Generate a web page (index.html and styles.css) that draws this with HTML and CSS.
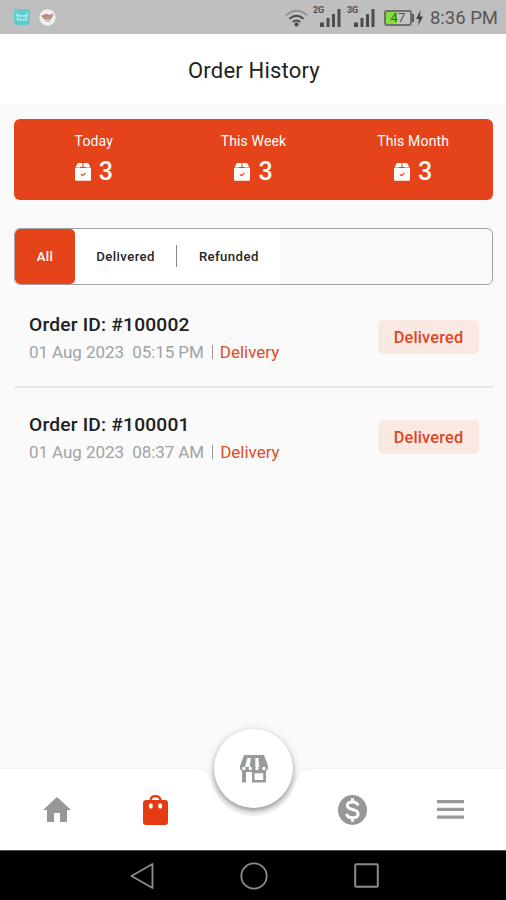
FILE: index.html
```html
<!DOCTYPE html>
<html lang="en">
<head>
<meta charset="utf-8">
<title>Order History</title>
<link rel="stylesheet" href="styles.css">
</head>
<body>
<svg class="defs" width="0" height="0" aria-hidden="true">
  <symbol id="package" viewBox="0 0 16 18">
    <path fill="#fff" d="M3.600 0h3.800v3.600l-.9.6-.7-.6-1 .8H.6L2.300.8Q2.600 0 3.600 0zM8.400 0h4q1 0 1.300.8l1.700 3.600H11l-.9-.8-.7.6-1-.6zM0 5.100h16v11.400q0 1.200-1.200 1.200H1.200Q0 17.700 0 16.500z"/>
    <path fill="none" stroke="#e54319" stroke-width="1.100" d="M5.800 11.200l1.700 1.500 3-2.900"/>
  </symbol>
  <symbol id="signal" viewBox="0 0 22 18">
    <path fill="#4c4c4c" d="M0 13.500h4V18H0zM6.500 9h3v9h-3zM12 5h3v13h-3zM17.500 0h3v18h-3z"/>
  </symbol>
</svg>
<div class="screen">
  <div class="status">
    <div class="notices">
      <svg width="16" height="16" viewBox="0 0 16 16"><rect width="16" height="16" rx="2.500" fill="#62cbd0"/><path d="M3.500 10.800V7.500l-.8-2.200 2.500 1.500h5.600l2.500-1.500-.8 2.200v3.300z" fill="none" stroke="#b5f0ef" stroke-width="1.200"/><path d="M5.500 9h1M9.500 9h1" stroke="#c9f5f3"/></svg>
      <svg width="17" height="17" viewBox="0 0 17 17"><circle cx="8.500" cy="8.500" r="8.200" fill="#f0efef"/><path d="M3 6.500l2.500 3h6l2.500-4.500" fill="none" stroke="#8d7d79" stroke-width="1.300"/><path d="M4 6q4-2 6 0l3-1.500-2 4H5.500z" fill="#c98074"/><path d="M6 11.800h5" stroke="#a29a96"/></svg>
    </div>
    <div class="indicators">
      <svg class="wifi" width="23" height="18" viewBox="0 0 23 18"><g fill="none" stroke-width="2"><path stroke="#929292" d="M1 6.300q10.500-9 21 0"/><path stroke="#4b4b4b" d="M4.500 9.700q7-6 14 0M7.800 13q3.700-3 7.400 0"/></g><circle cx="11.500" cy="15.500" r="2" fill="#444"/></svg>
      <div class="cell"><span>2G</span><svg width="22" height="18"><use href="#signal"/></svg></div>
      <div class="cell second"><span>3G</span><svg width="22" height="18"><use href="#signal"/></svg></div>
      <div class="battery"><span>47</span></div>
      <svg class="bolt" width="7" height="16" viewBox="0 0 7 16"><path fill="#444" d="M4.500 0L0 9h3L2 16l5-9.500H4z"/></svg>
      <time>8:36 PM</time>
    </div>
  </div>
  <header><h1>Order History</h1></header>
  <main>
    <section class="summary">
      <div class="stat"><span class="label">Today</span><div class="count"><svg width="16" height="18"><use href="#package"/></svg><b>3</b></div></div>
      <div class="stat"><span class="label">This Week</span><div class="count"><svg width="16" height="18"><use href="#package"/></svg><b>3</b></div></div>
      <div class="stat"><span class="label">This Month</span><div class="count"><svg width="16" height="18"><use href="#package"/></svg><b>3</b></div></div>
    </section>
    <nav class="filters">
      <span class="filter active">All</span>
      <span class="filter">Delivered</span>
      <i></i>
      <span class="filter">Refunded</span>
    </nav>
    <section class="orders">
      <article class="order">
        <div><h2>Order ID: #100002</h2><p><span class="date">01 Aug 2023&nbsp; 05:15 PM</span><i></i><span class="type">Delivery</span></p></div>
        <span class="badge">Delivered</span>
      </article>
      <article class="order">
        <div><h2>Order ID: #100001</h2><p><span class="date">01 Aug 2023&nbsp; 08:37 AM</span><i></i><span class="type">Delivery</span></p></div>
        <span class="badge">Delivered</span>
      </article>
    </section>
  </main>
  <nav class="tabs">
    <svg class="bar" width="506" height="90" viewBox="0 0 506 90"><path fill="#fff" d="M0 9h195Q207 9 211 20C217 42 233 56 253.500 56S290 42 296 20Q300 9 312 9H506V90H0z"/></svg>
    <div class="tab"><svg width="28" height="25" viewBox="0 0 28 25"><path fill="#979797" d="M14 0l14 13h-4v12h-7v-9h-6v9H4V13H0z"/></svg></div>
    <div class="tab"><svg width="25" height="30" viewBox="0 0 25 30"><rect y="5" width="25" height="25" rx="3" fill="#e43b13"/><path d="M7.500 8V6q0-4.800 5-4.800t5 4.800v2" fill="none" stroke="#e43b13" stroke-width="2.200"/><ellipse cx="7.800" cy="11" rx="2" ry="2.700" fill="#fff"/><ellipse cx="17.200" cy="11" rx="2" ry="2.700" fill="#fff"/></svg></div>
    <div class="tab"><div class="store"><svg width="28" height="28" viewBox="0 0 28 28"><path fill="#969b9e" d="M4 0h20l4 11v2q0 2-2 3v11.500H12V17H6v10.500H2V16q-2-1-2-3v-2z"/><g fill="#fff"><path d="M7.500 3h3.200L9.800 12H4.800zM15.300 3h3l1 9h-4zM14.500 18.200h8.700v6.800h-8.700z"/><circle cx="3.800" cy="13.500" r="1.700"/><circle cx="10.300" cy="13.500" r="1.700"/><circle cx="17" cy="13.500" r="1.700"/><circle cx="24" cy="13.500" r="1.700"/></g></svg></div></div>
    <div class="tab"><svg width="29" height="30" viewBox="0 0 29 30"><ellipse cx="14.500" cy="15" rx="14.500" ry="15" fill="#979797"/><path d="M20 10.500Q19 7 14.500 7 9.300 7 9.300 10.600c0 5.400 10.800 2.500 10.800 8.300q0 3.900-5.600 3.900-5.200 0-6-4M14.500 3.200V7M14.500 22.500v4.200" fill="none" stroke="#fff" stroke-width="3"/></svg></div>
    <div class="tab"><svg width="27" height="19" viewBox="0 0 27 19"><path fill="#999" d="M0 0h27v3.200H0zM0 7.700h27v3.200H0zM0 15.500h27v3.200H0z"/></svg></div>
  </nav>
  <footer>
    <svg width="24" height="28" viewBox="0 0 24 28"><path d="M22.500 2v24L1.500 14z" fill="none" stroke="#8b8b8b" stroke-width="1.900" stroke-linejoin="round"/></svg>
    <svg width="28" height="28" viewBox="0 0 28 28"><circle cx="14" cy="14" r="12.700" fill="none" stroke="#8b8b8b" stroke-width="1.800"/></svg>
    <svg width="25" height="25" viewBox="0 0 25 25"><rect x="1.200" y="1.200" width="22.600" height="22.600" rx="1" fill="none" stroke="#8b8b8b" stroke-width="2"/></svg>
  </footer>
</div>
</body>
</html>
```
FILE: styles.css
```css
* { box-sizing: border-box; }
body { margin: 0; font-family: Roboto, "Liberation Sans", sans-serif; background: #fafafa; }
svg { display: block; flex: none; }
.defs { position: absolute; }
.screen { width: 506px; height: 900px; display: flex; flex-direction: column; overflow: hidden; }

.status { height: 34px; flex: none; background: #bfbfbf; display: flex; justify-content: space-between; padding: 0 8px 0 14px; }
.notices { display: flex; align-items: center; gap: 9px; }
.indicators { display: flex; align-items: center; color: #505050; padding-top: 1px; }
.wifi { margin-right: 5px; }
.cell { display: flex; position: relative; padding-left: 7px; margin-right: 5px; }
.cell.second { margin-right: 8px; }
.cell span { position: absolute; left: 0; top: -3px; font-size: 9px; line-height: 9px; font-weight: 700; }
.battery { width: 28px; height: 16px; border: 2px solid #707070; border-radius: 3px; background: linear-gradient(90deg, #86df3e 11px, #c4c4c4 11px); display: flex; align-items: center; justify-content: center; position: relative; font-size: 13px; }
.battery::after { content: ""; position: absolute; left: 26px; top: 2px; width: 2px; height: 8px; background: #5b5b5b; }
.bolt { margin: 0 7px 0 4px; }
time { font-size: 18.500px; white-space: nowrap; color: #575757; }

header { height: 70px; flex: none; background: #fff; display: flex; align-items: center; justify-content: center; padding: 2px 0 0 2px; }
h1 { margin: 0; font-size: 22px; font-weight: 400; color: #222; letter-spacing: .2px; }
main { flex: 1; padding: 15px 13px 0 14px; min-height: 0; }
.summary { height: 81px; background: #e54319; border-radius: 6px; display: grid; grid-template-columns: repeat(3, 1fr); color: #fff; }
.stat { display: flex; flex-direction: column; align-items: center; padding: 12px 0 0; }
.label { font-size: 14px; line-height: 20px; letter-spacing: .15px; }
.count { display: flex; align-items: center; gap: 8px; height: 42px; }
.count b { font-size: 25px; font-weight: 500; line-height: 42px; }

.filters { margin-top: 28px; height: 57px; border: 1px solid #a3a3a3; border-radius: 6px; display: flex; align-items: center; overflow: hidden; }
.filter { height: 55px; display: flex; align-items: center; padding: 0 21.300px 1px 21.700px; background: #fff; font-size: 13.200px; font-weight: 500; color: #262626; letter-spacing: .4px; }
.filter.active { background: #e54319; color: #fff; border-radius: 5px; }
.filters i { width: 1px; height: 55px; background: linear-gradient(#fff 16px, #8a8a8a 16px 38px, #fff 38px); }

.orders { padding-top: 3px; }
.order { height: 100px; border-bottom: 2px solid #e7e7e7; padding: 1px 14px 0 15px; display: flex; align-items: center; justify-content: space-between; }
.order:last-child { border-color: transparent; }
h2 { margin: 0; font-size: 19.200px; line-height: 24px; font-weight: 500; color: #202020; letter-spacing: .2px; }
.order p { margin: 4px 0 0; font-size: 17px; line-height: 22px; display: flex; align-items: center; white-space: nowrap; }
.date { color: #a0a3a4; letter-spacing: -.07px; }
.order i { width: 1px; height: 14px; background: #999; margin: 0 7px 0 8px; }
.type { color: #e14b25; }
.badge { width: 101px; height: 34px; margin-bottom: 1px; background: #fae8e3; color: #dd4524; border-radius: 5px; display: flex; align-items: center; justify-content: center; font-size: 16.300px; font-weight: 500; letter-spacing: .2px; }

.tabs { height: 90px; flex: none; display: grid; grid-template-columns: repeat(5, 98.500px); justify-content: center; padding: 9px 0 0 1px; position: relative; }
.bar { position: absolute; inset: 0; filter: drop-shadow(0 0 2px #0001); }
.tab { display: flex; align-items: center; justify-content: center; position: relative; }
.store { width: 79px; height: 79px; border-radius: 50%; background: #fff; box-shadow: 0 3px 5px #0005, 0 1px 10px #0002; display: flex; align-items: center; justify-content: center; flex: none; position: relative; top: -41px; }
footer { height: 50px; flex: none; background: #000; border-top: 1px solid #555; display: flex; align-items: center; padding-left: 130px; gap: 86px; }
```
